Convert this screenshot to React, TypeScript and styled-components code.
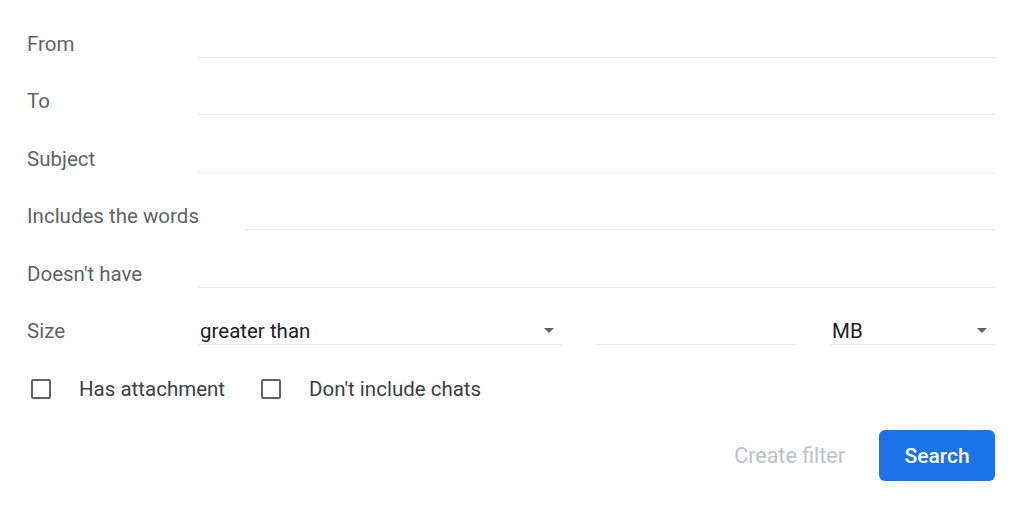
import React from 'react';
import styled, { createGlobalStyle } from 'styled-components';

const GlobalStyle = createGlobalStyle`
  html, body {
    margin: 0;
    padding: 0;
    background: #ffffff;
  }
  body {
    font-family: Roboto, "Noto Sans", "Liberation Sans", sans-serif;
  }
`;

const Form = styled.form`
  width: 1024px;
  box-sizing: border-box;
  padding: 15px 29px 0 27px;
`;

const Row = styled.div`
  display: flex;
  align-items: center;
  height: 57.5px;
`;

const Label = styled.label`
  min-width: 125px;
  margin-right: 46px;
  font-size: 20.5px;
  color: #5f6368;
  white-space: nowrap;
`;

const TextInput = styled.input`
  flex: 1;
  min-width: 0;
  height: 28px;
  box-sizing: border-box;
  border: none;
  border-bottom: 1px solid #e8eaed;
  outline: none;
  background: transparent;
  font-family: inherit;
  font-size: 20.5px;
  color: #202124;
  padding: 0 2px;
`;

const SizeGroup = styled.div`
  flex: 1;
  display: grid;
  grid-template-columns: 364px 200px 165px;
  justify-content: space-between;
  align-items: center;
`;

const Select = styled.div`
  display: flex;
  align-items: center;
  justify-content: space-between;
  height: 28px;
  box-sizing: border-box;
  border-bottom: 1px solid #e8eaed;
  padding: 0 8px 0 2px;
  font-size: 20.5px;
  color: #202124;
  cursor: pointer;
`;

const Caret = styled.span`
  width: 0;
  height: 0;
  border-left: 5px solid transparent;
  border-right: 5px solid transparent;
  border-top: 5px solid #5f6368;
`;

const CheckRow = styled.div`
  display: flex;
  align-items: center;
  height: 58px;
  padding-left: 4px;
`;

const CheckLabel = styled.label`
  display: flex;
  align-items: center;
  margin-right: 36px;
  font-size: 20.5px;
  color: #3c4043;
  cursor: pointer;
`;

const Box = styled.span`
  width: 20px;
  height: 20px;
  box-sizing: border-box;
  border: 2px solid #5f6368;
  border-radius: 2px;
  margin-right: 28px;
`;

const Actions = styled.div`
  display: flex;
  justify-content: flex-end;
  align-items: center;
  margin-top: 12px;
`;

const TextButton = styled.button`
  border: none;
  background: none;
  font-family: inherit;
  font-size: 21.5px;
  color: #bdc1c6;
  padding: 0 16px;
  margin-right: 18px;
  height: 51px;
`;

const PrimaryButton = styled.button`
  border: none;
  background: #1a73e8;
  color: #ffffff;
  font-family: inherit;
  font-size: 21px;
  font-weight: 500;
  width: 116px;
  height: 51px;
  border-radius: 6px;
  cursor: pointer;
`;

const fields = ['From', 'To', 'Subject', 'Includes the words', "Doesn't have"];

export default function App() {
  return (
    <>
      <GlobalStyle />
      <Form onSubmit={(e) => e.preventDefault()}>
        {fields.map((f) => (
          <Row key={f}>
            <Label>{f}</Label>
            <TextInput type="text" />
          </Row>
        ))}
        <Row>
          <Label>Size</Label>
          <SizeGroup>
            <Select>
              <span>greater than</span>
              <Caret />
            </Select>
            <TextInput type="text" />
            <Select>
              <span>MB</span>
              <Caret />
            </Select>
          </SizeGroup>
        </Row>
        <CheckRow>
          <CheckLabel>
            <Box />
            Has attachment
          </CheckLabel>
          <CheckLabel>
            <Box />
            Don't include chats
          </CheckLabel>
        </CheckRow>
        <Actions>
          <TextButton type="button" disabled>Create filter</TextButton>
          <PrimaryButton type="submit">Search</PrimaryButton>
        </Actions>
      </Form>
    </>
  );
}
